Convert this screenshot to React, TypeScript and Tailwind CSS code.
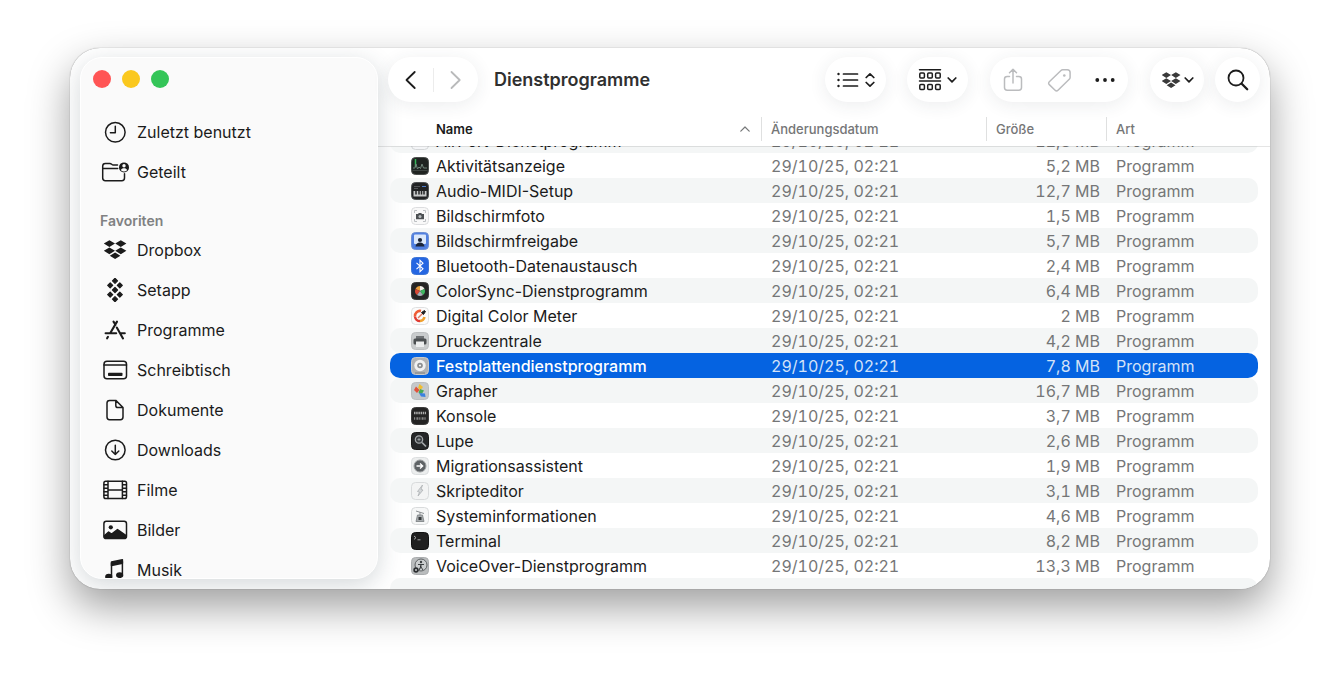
import React, { useLayoutEffect, useRef, useState } from 'react';
import { clsx } from 'clsx';

interface FileEntry {
  name: string;
  size: string;
  icon: React.ReactNode;
}

const SIDEBAR_STROKE = {
  fill: 'none',
  stroke: 'currentColor',
  strokeWidth: 1.5,
  strokeLinecap: 'round',
  strokeLinejoin: 'round',
} as const;

function SidebarIcon({ children }: { children: React.ReactNode }) {
  return (
    <svg viewBox="0 0 28 24" className="w-7 h-6 shrink-0" aria-hidden="true" {...SIDEBAR_STROKE}>
      {children}
    </svg>
  );
}

// Shared by the sidebar entry and the toolbar menu
function DropboxShape() {
  return (
    <path
      fill="currentColor"
      stroke="none"
      d="M8.4 2.2 14 5.6 8.4 9 2.8 5.6zM19.8 2.2 25.4 5.6 19.8 9 14.2 5.6zM8.4 9.4 14 12.8 8.4 16.2 2.8 12.8zM19.8 9.4 25.4 12.8 19.8 16.2 14.2 12.8zM14.1 14.6 19.4 17.8 14.1 21 8.8 17.8z"
    />
  );
}

const recents = [
  {
    label: 'Zuletzt benutzt',
    icon: (
      <>
        <circle cx="14.3" cy="12.3" r="9.8" />
        <path d="M14.3 6.3v6.5H9.4" />
      </>
    ),
  },
  {
    label: 'Geteilt',
    icon: (
      <>
        <path d="M16.5 5h-4.3c-1.4 0-1.7-1.6-3.3-1.6H4.4C2.7 3.4 1.7 4.4 1.7 6v12c0 1.7 1 2.7 2.7 2.7h16.4c1.7 0 2.7-1 2.7-2.7v-4.2M1.7 8.4h15" />
        <circle cx="23" cy="7.4" r="5" fill="currentColor" stroke="none" />
        <circle cx="23" cy="5.8" r="1.7" fill="#fafafa" stroke="none" />
        <path d="M19.9 10.2c.4-1.5 1.6-2 3.1-2s2.7.5 3.1 2a4.6 4.6 0 0 1-6.2 0z" fill="#fafafa" stroke="none" />
      </>
    ),
  },
];

const favorites = [
  { label: 'Dropbox', icon: <DropboxShape /> },
  {
    label: 'Setapp',
    icon: (
      <path
        fill="currentColor"
        strokeWidth="1.2"
        d="M14 .3l2.5 2.5-2.5 2.5-2.5-2.5zM9.2 4.8l2.500 2.500-2.500 2.500-2.500-2.500zM18.800 4.800l2.500 2.500-2.500 2.500-2.500-2.500zM14 9.500l2.500 2.500-2.500 2.500-2.500-2.500zM9.200 14.200l2.500 2.500-2.500 2.500-2.500-2.500zM18.800 14.200l2.500 2.500-2.500 2.500-2.500-2.500zM14 18.700l2.500 2.500-2.500 2.500-2.500-2.500z"
      />
    ),
  },
  {
    label: 'Programme',
    icon: <path strokeWidth="2.1" d="M16 3.6 9.3 15M12.5 3.6l2 3.2M15.8 9.6l6.2 10.8M4.6 15.3h10.6M19.6 15.3h4.2M7 18.8l-.9 1.5" />,
  },
  {
    label: 'Schreibtisch',
    icon: (
      <>
        <rect x="3" y="3.3" width="22.5" height="17.5" rx="3" />
        <path d="M3 7h22.5" />
        <rect x="7" y="14.8" width="14.5" height="3.2" rx=".8" fill="currentColor" stroke="none" />
      </>
    ),
  },
  {
    label: 'Dokumente',
    icon: (
      <path d="M14.8 2.4H8.6C7 2.4 6 3.4 6 5v14c0 1.7 1 2.7 2.6 2.7h10.8c1.6 0 2.6-1 2.6-2.7V9.5zM14.8 2.4v5c0 1.4.7 2.1 2.1 2.1H22" />
    ),
  },
  {
    label: 'Downloads',
    icon: (
      <>
        <circle cx="14.3" cy="12" r="9.8" />
        <path d="M14.3 7.3v9.2M10.8 13l3.5 3.5 3.5-3.5" />
      </>
    ),
  },
  {
    label: 'Filme',
    icon: (
      <>
        <rect x="2.9" y="3.3" width="22.6" height="17.3" rx="1.8" />
        <path d="M7 3.3v17.3M21.4 3.3v17.3M7 12h14.4M3 6.8h4M3 10.2h4M3 13.7h4M3 17.2h4M21.4 6.8h4M21.4 10.2h4M21.4 13.7h4M21.4 17.2h4" />
      </>
    ),
  },
  {
    label: 'Bilder',
    icon: (
      <>
        <rect x="2.9" y="3.3" width="22.6" height="17.3" rx="2.4" />
        <circle cx="9.8" cy="9.3" r="2.1" fill="currentColor" stroke="none" />
        <path fill="currentColor" d="M3.4 17.8 7.6 14l3 2 5.9-4.4 8.6 6c-.1 1.9-.8 2.7-2.2 2.7H5.6c-1.4 0-2.2-.9-2.2-2.5z" />
      </>
    ),
  },
  {
    label: 'Musik',
    icon: (
      <>
        <path fill="currentColor" d="M10.5 3.9 21.4 1.7v3.6L10.5 7.5z" />
        <path d="M10.5 5v13M21.4 3.5V16" />
        <ellipse cx="7.8" cy="18.8" rx="2.9" ry="2.2" fill="currentColor" />
        <ellipse cx="18.7" cy="17.1" rx="2.9" ry="2.2" fill="currentColor" />
      </>
    ),
  },
];

function Tile({ fill, border = '#d4d6d8', children }: { fill: string; border?: string; children?: React.ReactNode }) {
  return (
    <svg viewBox="0 0 18 18" className="w-[18px] h-[18px] shrink-0" aria-hidden="true">
      <rect x=".5" y=".5" width="17" height="17" rx="4" fill={fill} stroke={border} />
      {children}
    </svg>
  );
}

const files: FileEntry[] = [
  {
    name: 'AirPort-Dienstprogramm',
    size: '12,8 MB',
    icon: <Tile fill="#f4f5f7"><path d="M4 12h10" stroke="#c3c7cc" /></Tile>,
  },
  {
    name: 'Aktivitätsanzeige',
    size: '5,2 MB',
    icon: (
      <Tile fill="#1f2321" border="#4b4f4d">
        <path d="M4.5 2v8" stroke="#35b558" strokeWidth="1.5" />
        <path d="M2 11h2l1-4 1.5 5L8 10l1.5 1.5L11 7l1.500 4H16" fill="none" stroke="#71857a" />
        <path d="M1.5 13.5h15" stroke="#4c5550" strokeWidth=".7" />
      </Tile>
    ),
  },
  {
    name: 'Audio-MIDI-Setup',
    size: '12,7 MB',
    icon: (
      <Tile fill="#202224" border="#4d5052">
        <path d="M3 4.5h6M3 6.5h4" stroke="#505457" />
        <path d="M11 4.5h4" stroke="#4b7ac8" />
        <rect x="2.5" y="9" width="13" height="5.5" fill="#c6c8c9" />
        <path d="M5 8.5v4M8 8.5v4M10.5 8.5v4M13 8.5v4" stroke="#222426" strokeWidth="1.5" />
      </Tile>
    ),
  },
  {
    name: 'Bildschirmfoto',
    size: '1,5 MB',
    icon: (
      <Tile fill="#f8f8f8" border="#dcdddf">
        <path d="M3.5 6V3.5H6M12 3.5h2.5V6M14.5 12v2.5H12M6 14.5H3.5V12" fill="none" stroke="#bdc0c3" />
        <path d="M5 7h2l.8-1h2.4l.8 1h2v5.3H5z" fill="#4c5053" />
        <circle cx="9" cy="9.5" r="1.5" fill="#b8bcbf" />
      </Tile>
    ),
  },
  {
    name: 'Bildschirmfreigabe',
    size: '5,7 MB',
    icon: (
      <Tile fill="#4f7fe0" border="#6e8fd2">
        <rect x="3" y="2.5" width="12" height="9.5" rx="1" fill="#dbe8fa" />
        <circle cx="9" cy="8" r="2.1" fill="#1c2537" />
        <path d="M4.5 14.5c.3-2.7 2.2-4 4.5-4s4.2 1.3 4.5 4z" fill="#1c2537" />
      </Tile>
    ),
  },
  {
    name: 'Bluetooth-Datenaustausch',
    size: '2,4 MB',
    icon: (
      <Tile fill="#2466e2" border="#3d75d6">
        <path d="M5.5 5.8l6.5 6-3 2.9V3.3l3 2.900-6.500 6" fill="none" stroke="#fff" strokeWidth="1.1" />
      </Tile>
    ),
  },
  {
    name: 'ColorSync-Dienstprogramm',
    size: '6,4 MB',
    icon: (
      <Tile fill="#252525" border="#3a3a3a">
        <path d="M9 9V4a5 5 0 0 0-4.5 3z" fill="#e8a13e" />
        <path d="M9 9 4.5 7a5 5 0 0 0 1.5 6z" fill="#d94836" />
        <path d="M9 9V4a5 5 0 0 1 4.5 3z" fill="#f2efe9" />
        <path d="m9 9 4.5-2a5 5 0 0 1-1.5 6z" fill="#3fb861" />
        <path d="M9 9 6 13q3 2 6 0z" fill="#a9aeb8" />
      </Tile>
    ),
  },
  {
    name: 'Digital Color Meter',
    size: '2 MB',
    icon: (
      <Tile fill="#fbfbfb" border="#dfe0e1">
        <path d="M10 4a5 5 0 0 0-6 5.5" fill="none" stroke="#ef5c35" strokeWidth="2.5" />
        <path d="M4 9.5A5 5 0 0 0 9 14" fill="none" stroke="#e03b32" strokeWidth="2.5" />
        <path d="M9 14a5 5 0 0 0 4.5-4" fill="none" stroke="#f0a02e" strokeWidth="2.5" />
        <path d="m7 11 4.5-4.5" stroke="#e0785f" strokeWidth="1.5" />
        <path d="m10.5 5.5 2 2 2-3-1-1z" fill="#202020" stroke="#202020" />
      </Tile>
    ),
  },
  {
    name: 'Druckzentrale',
    size: '4,2 MB',
    icon: (
      <Tile fill="#c9cccd" border="#bcbfc0">
        <path d="M5 4h8v3H5z" fill="#6f7375" />
        <rect x="2.5" y="6.5" width="13" height="6" rx="1.5" fill="#4c5052" />
        <path d="M5 9.5h8V15H5z" fill="#eceeee" />
      </Tile>
    ),
  },
  {
    name: 'Festplattendienstprogramm',
    size: '7,8 MB',
    icon: (
      <Tile fill="#b0b2b3" border="#c8cacb">
        <circle cx="9" cy="8.5" r="5.7" fill="#f0f1f1" />
        <circle cx="9" cy="8.5" r="2.8" fill="#8b8e90" />
        <circle cx="9" cy="8.5" r="1.1" fill="#f6f6f6" />
        <path d="M4 16h10" stroke="#7d8082" />
      </Tile>
    ),
  },
  {
    name: 'Grapher',
    size: '16,7 MB',
    icon: (
      <Tile fill="#c5c8ca" border="#babdbf">
        <path d="M8.5 2 12 5 9.5 8 7 6z" fill="#f1bd31" />
        <path d="m5 4.500 3.500 3.500L6 11 3 8z" fill="#e0523b" />
        <path d="m9 7 4 1.500-2.500 4-3-2z" fill="#47a957" />
        <path d="m8 11 6 .5.5 3.500-4.500-.5z" fill="#3c82df" />
      </Tile>
    ),
  },
  {
    name: 'Konsole',
    size: '3,7 MB',
    icon: (
      <Tile fill="#242424" border="#3c3c3c">
        <path d="M3 6h12" stroke="#aaa" strokeWidth="2.5" strokeDasharray="1.5 .7" />
        <path d="M3 11.5h12" stroke="#858585" strokeWidth="2.5" strokeDasharray="1.2 1.2 2 .8" />
      </Tile>
    ),
  },
  {
    name: 'Lupe',
    size: '2,6 MB',
    icon: (
      <Tile fill="#252729" border="#1a1a1a">
        <circle cx="8" cy="7.5" r="3.7" fill="#3d4144" stroke="#a5a9ac" strokeWidth="1.2" />
        <path d="m11 10.5 4 4" stroke="#a5a9ac" strokeWidth="1.7" />
        <path d="M6.5 7.5h3M8 6v3" stroke="#a5a9ac" strokeWidth=".8" />
      </Tile>
    ),
  },
  {
    name: 'Migrationsassistent',
    size: '1,9 MB',
    icon: (
      <Tile fill="#eceeee" border="#dcdfe0">
        <circle cx="9" cy="9" r="6" fill="#5e6265" stroke="#9b9ea0" />
        <path d="M5.5 9h6M9 6.5 11.7 9 9 11.5" fill="none" stroke="#fff" strokeWidth="1.3" />
      </Tile>
    ),
  },
  {
    name: 'Skripteditor',
    size: '3,1 MB',
    icon: (
      <Tile fill="#f3f4f4" border="#d9dbdc">
        <path d="m11.5 3-5 6.5 2 .5L7 14l5-6-2-.5z" fill="#d5d8da" stroke="#adb1b4" strokeWidth=".8" />
      </Tile>
    ),
  },
  {
    name: 'Systeminformationen',
    size: '4,6 MB',
    icon: (
      <Tile fill="#f6f7f7" border="#d9dbdc">
        <path d="m5 4 8 2.5M9 5v3" stroke="#8d9194" />
        <path d="M6.5 8h5l1.5 6.5H5z" fill="#a7abae" stroke="#797d80" strokeWidth=".8" />
        <path d="M7.5 10h3v3h-3z" fill="#35383a" />
      </Tile>
    ),
  },
  {
    name: 'Terminal',
    size: '8,2 MB',
    icon: (
      <Tile fill="#202020" border="#111">
        <path d="m3 4 2 1.7-2 1.7M6.5 7.8h3" fill="none" stroke="#a5a5a5" />
      </Tile>
    ),
  },
  {
    name: 'VoiceOver-Dienstprogramm',
    size: '13,3 MB',
    icon: (
      <Tile fill="#b9bcbd" border="#aaadaf">
        <circle cx="10" cy="8" r="6" fill="#cbcecf" stroke="#5e6264" />
        <circle cx="10" cy="5" r="1.2" fill="#3c4042" />
        <path d="M7 7.5h6M10 7v3l-2 3M10 10l2 3" stroke="#3c4042" />
        <circle cx="5" cy="13" r="2.7" fill="#2a2d2f" />
        <circle cx="5" cy="13" r=".9" fill="#d9dbdc" />
      </Tile>
    ),
  },
];

function Sidebar() {
  return (
    <nav className="w-[298px] shrink-0 flex flex-col rounded-[22px] bg-[#fafafa] overflow-hidden border border-white shadow-[0_6px_24px_rgba(40,60,70,0.2)]">
      <div className="flex items-center gap-[11px] pt-3 pl-3">
        <button aria-label="Schließen" className="w-[18px] h-[18px] rounded-full bg-[#ff5555]" />
        <button aria-label="Minimieren" className="w-[18px] h-[18px] rounded-full bg-[#fac81e]" />
        <button aria-label="Vergrößern" className="w-[18px] h-[18px] rounded-full bg-[#34c558]" />
      </div>
      <SidebarList items={recents} className="mt-6" />
      <h2 className="mt-5 pl-[19px] text-[14px] leading-[18px] font-semibold text-[#808182]">Favoriten</h2>
      <SidebarList items={favorites} />
    </nav>
  );
}

function SidebarList({ items, className }: { items: typeof recents; className?: string }) {
  return (
    <ul className={clsx('shrink-0', className)}>
      {items.map((item) => (
        <li key={item.label}>
          <a href="#" className="flex items-center gap-2 h-10 pl-5 text-[16px] leading-5 text-[#1b1b1b]">
            <SidebarIcon>{item.icon}</SidebarIcon>
            {item.label}
          </a>
        </li>
      ))}
    </ul>
  );
}

const PILL = 'h-[45px] shrink-0 flex items-center justify-center rounded-full bg-white shadow-[0_3px_18px_rgba(40,60,70,0.09)] text-[#1d1d1d]';

function ChevronDown() {
  return (
    <svg viewBox="0 0 10 8" className="w-[10px] h-2" aria-hidden="true" {...SIDEBAR_STROKE} strokeWidth="1.7">
      <path d="M1.2 2 5 5.8 8.8 2" />
    </svg>
  );
}

function Toolbar() {
  return (
    <header className="h-[63px] shrink-0 flex items-center px-[10px]">
      <div className={clsx(PILL, 'w-[90px]')}>
        <button aria-label="Zurück" className="flex-1 flex justify-center">
          <svg viewBox="0 0 12 20" className="w-3 h-5" {...SIDEBAR_STROKE} strokeWidth="1.8">
            <path d="M10.7 2 2.5 10l8.2 8" />
          </svg>
        </button>
        <span className="w-px h-6 bg-[#ececec]" />
        <button aria-label="Vorwärts" className="flex-1 flex justify-center text-[#b9babb]">
          <svg viewBox="0 0 12 20" className="w-3 h-5" {...SIDEBAR_STROKE} strokeWidth="1.8">
            <path d="m1.5 2 8.200 8-8.200 8" />
          </svg>
        </button>
      </div>
      <h1 className="flex-1 pl-4 text-[18px] leading-6 font-semibold text-[#303030]">Dienstprogramme</h1>

      <button aria-label="Darstellung" className={clsx(PILL, 'w-[61px] gap-[6px]')}>
        <svg viewBox="0 0 22 16" className="w-[22px] h-4" {...SIDEBAR_STROKE} strokeWidth="1.7">
          <path d="M6.5 2h14M6.5 8h14M6.5 14h14" />
          <path d="M1.5 2h.01M1.5 8h.01M1.5 14h.01" strokeWidth="2.4" />
        </svg>
        <svg viewBox="0 0 10 16" className="w-[10px] h-4" {...SIDEBAR_STROKE} strokeWidth="1.7">
          <path d="M1.2 5.5 5 1.8l3.8 3.700M1.2 10.500 5 14.200l3.800-3.700" />
        </svg>
      </button>

      <button aria-label="Gruppieren" className={clsx(PILL, 'ml-[21px] w-[61px] gap-[5px]')}>
        <svg viewBox="0 0 24 24" className="w-6 h-6" {...SIDEBAR_STROKE}>
          <path d="M1.5 1.7h21M1.5 13h21" />
          <rect x="1.8" y="5" width="4.6" height="5" rx="1" />
          <rect x="9.7" y="5" width="4.6" height="5" rx="1" />
          <rect x="17.6" y="5" width="4.6" height="5" rx="1" />
          <rect x="1.8" y="16.6" width="4.6" height="5" rx="1" />
          <rect x="9.7" y="16.6" width="4.6" height="5" rx="1" />
          <rect x="17.6" y="16.6" width="4.6" height="5" rx="1" />
        </svg>
        <ChevronDown />
      </button>

      <div className={clsx(PILL, 'ml-[22px]')}>
        <button aria-label="Teilen" className="w-[46px] flex justify-center text-[#bbbcbe]">
          <svg viewBox="0 0 20 24" className="w-5 h-6" {...SIDEBAR_STROKE}>
            <path d="M6.5 8.5H4.2C2.5 8.5 1.5 9.5 1.5 11v8.5c0 1.7 1 2.7 2.7 2.7h11.6c1.7 0 2.7-1 2.7-2.7V11c0-1.5-1-2.5-2.7-2.500h-2.300M10 15V1.500M6.500 4.800 10 1.300l3.500 3.500" />
          </svg>
        </button>
        <button aria-label="Tags" className="w-[46px] flex justify-center text-[#bbbcbe]">
          <svg viewBox="0 0 24 24" className="w-6 h-6" {...SIDEBAR_STROKE}>
            <path d="M14 2.5 2.3 13.7c-.9.9-.9 2 0 2.9l5.8 5.7c.9.9 2 .9 2.9 0L22.5 11c.4-.4.6-.9.6-1.5V4.6c0-1.7-1.1-2.8-2.8-2.8h-4.7c-.6 0-1.2.3-1.6.7z" />
            <circle cx="17.3" cy="7.5" r="1.3" fill="currentColor" stroke="none" />
          </svg>
        </button>
        <button aria-label="Mehr" className="w-[46px] flex justify-center">
          <svg viewBox="0 0 20 6" className="w-5 h-[6px]" fill="currentColor">
            <circle cx="2.3" cy="3" r="1.9" />
            <circle cx="10" cy="3" r="1.9" />
            <circle cx="17.7" cy="3" r="1.9" />
          </svg>
        </button>
      </div>

      <button aria-label="Dropbox" className={clsx(PILL, 'ml-[22px] w-[54px] gap-[3px]')}>
        <svg viewBox="2 1 24 21" className="w-5 h-[18px] text-[#3a3a3a]">
          <DropboxShape />
        </svg>
        <ChevronDown />
      </button>

      <button aria-label="Suchen" className={clsx(PILL, 'ml-[11px] w-[45px]')}>
        <svg viewBox="0 0 22 22" className="w-[22px] h-[22px]" {...SIDEBAR_STROKE} strokeWidth="1.8">
          <circle cx="9" cy="9" r="7.5" />
          <path d="m14.7 14.7 5.500 5.500" strokeWidth="2.3" />
        </svg>
      </button>
    </header>
  );
}

function HeaderCell({ children }: { children: React.ReactNode }) {
  return (
    <th scope="col" className="flex items-center h-6 border-l border-[#dfe0e0] pl-[9px] font-medium">
      {children}
    </th>
  );
}

// Header and body rows share the same column tracks
const ROW = 'grid grid-cols-[minmax(0,1fr)_225px_120px_152px] items-center';

function FileTable() {
  const [selected, setSelected] = useState('Festplattendienstprogramm');
  const body = useRef<HTMLTableSectionElement>(null);

  // Open slightly scrolled, so the first entry slides under the header
  useLayoutEffect(() => {
    if (body.current) body.current.scrollTop = 18;
  }, []);

  return (
    <table className="flex-1 min-h-0 flex flex-col">
      <thead className="block relative z-10 shrink-0 px-3 text-[13px] leading-4 text-[#757677] after:absolute after:-bottom-px after:inset-x-0 after:h-px after:bg-black/10">
        <tr className={clsx(ROW, 'h-[35px]')}>
          <th scope="col" className="flex items-center justify-between pl-[46px] pr-[11px] font-semibold text-[#1b1b1b]">
            Name
            <svg viewBox="0 0 10 6" className="w-[10px] h-[6px]" {...SIDEBAR_STROKE} strokeWidth="1.2" stroke="#77797a">
              <path d="M.8 5.200 5 1l4.200 4.200" />
            </svg>
          </th>
          <HeaderCell>Änderungsdatum</HeaderCell>
          <HeaderCell>Größe</HeaderCell>
          <HeaderCell>Art</HeaderCell>
        </tr>
      </thead>
      <tbody
        ref={body}
        className="block flex-1 min-h-0 overflow-x-hidden overflow-y-auto [scrollbar-width:none] px-3 text-[16px] leading-5"
      >
        {files.map((file, index) => {
          const isSelected = file.name === selected;
          return (
            <tr
              key={file.name}
              onClick={() => setSelected(file.name)}
              className={clsx(
                ROW,
                'h-[25px] rounded-[10px]',
                isSelected ? 'bg-[#0563e1] text-[#d3e2f8]' : 'text-[#757677]',
                !isSelected && index % 2 === 0 && 'bg-[#f4f6f6]'
              )}
            >
              <td
                className={clsx(
                  'flex items-center gap-[7px] pl-[21px] whitespace-nowrap',
                  isSelected ? 'font-medium text-white' : 'text-[#1b1b1b]'
                )}
              >
                {file.icon}
                {file.name}
              </td>
              <td className="pl-[10px] tabular-nums">29/10/25, 02:21</td>
              <td className="pr-[6px] text-right tabular-nums">{file.size}</td>
              <td className="pl-[10px]">Programm</td>
            </tr>
          );
        })}
        <tr className="block h-[25px] rounded-[10px] bg-[#f4f6f6]">
          <td />
        </tr>
      </tbody>
    </table>
  );
}

export default function App() {
  return (
    <main className="h-screen min-w-[960px] flex bg-white px-[70px] pt-12 pb-[92px] font-['Inter',sans-serif]">
      <div className="flex-1 min-w-0 flex rounded-[30px] bg-white overflow-hidden shadow-[0_18px_42px_rgba(0,0,0,0.38),0_0_1px_rgba(0,0,0,0.5)]">
        <div className="flex pt-[9px] pb-[10px] pl-[10px]">
          <Sidebar />
        </div>
        <section className="flex-1 min-w-0 flex flex-col">
          <Toolbar />
          <FileTable />
        </section>
      </div>
    </main>
  );
}
